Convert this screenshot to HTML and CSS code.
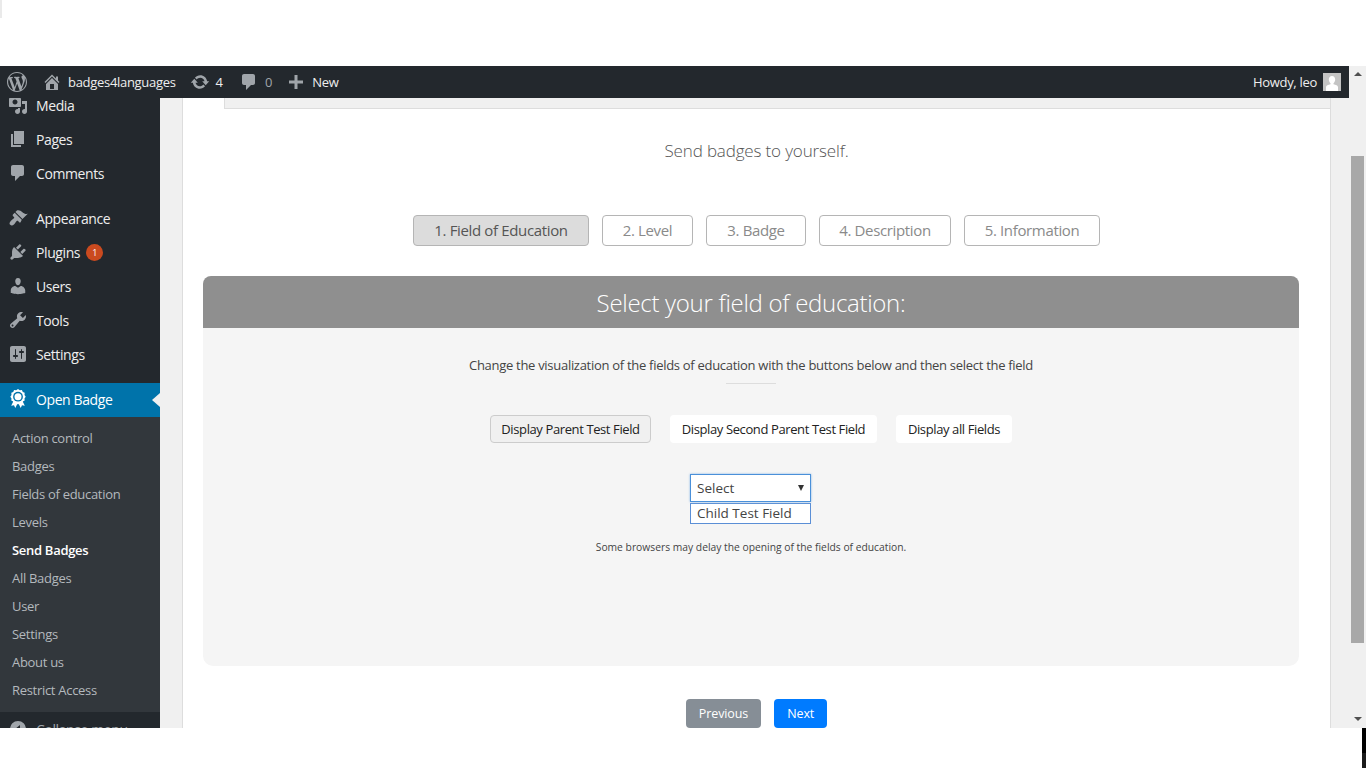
FILE: index.html
```html
<!DOCTYPE html>
<html lang="en">
<head>
  <meta charset="UTF-8">
  <title>Send Badges</title>
  <link rel="stylesheet" href="styles.css">
</head>
<body>
  <div class="window">
    <div class="page">

      <!-- TOP ADMIN BAR -->
      <div class="adminbar">
        <a class="bar-item bar-logo">
          <svg class="bar-icon wp" viewBox="0 0 20 20"><path d="M20 10c0-5.51-4.49-10-10-10C4.48 0 0 4.49 0 10c0 5.52 4.48 10 10 10 5.51 0 10-4.48 10-10zM7.78 15.37L4.37 6.22c.55-.02 1.17-.08 1.17-.08.5-.06.44-1.13-.06-1.11 0 0-1.45.11-2.37.11-.18 0-.37 0-.58-.01C4.12 2.69 6.87 1.11 10 1.11c2.33 0 4.45.87 6.05 2.34-.68-.11-1.65.39-1.65 1.58 0 .74.45 1.36.9 2.1.35.61.55 1.36.55 2.46 0 1.49-1.4 5-1.4 5l-3.03-8.37c.54-.02.82-.17.82-.17.5-.05.44-1.25-.06-1.22 0 0-1.44.12-2.38.12-.87 0-2.33-.12-2.33-.12-.5-.03-.56 1.2-.06 1.22l.92.08 1.26 3.41zM17.41 10c.24-.64.74-1.87.43-4.25.7 1.29 1.05 2.71 1.05 4.25 0 3.29-1.73 6.24-4.4 7.78.97-2.59 1.94-5.2 2.92-7.78zM6.1 18.09C3.12 16.65 1.11 13.53 1.11 10c0-1.3.23-2.48.72-3.59C3.25 10.3 4.67 14.2 6.1 18.09zm4.03-6.63l2.58 6.98c-.86.29-1.76.45-2.71.45-.79 0-1.57-.11-2.29-.33.81-2.38 1.62-4.74 2.42-7.1z"/></svg>
        </a>
        <a class="bar-item">
          <svg class="bar-icon" viewBox="0 0 20 20"><path d="M16 8.5l1.53 1.53-1.06 1.06L10 4.62l-6.47 6.47-1.06-1.06L10 2.5l4 4v-2h2v4zm-6-2.46l6 5.99V18H4v-5.97zM12 17v-5H8v5h4z"/></svg>
          <span>badges4languages</span>
        </a>
        <a class="bar-item">
          <svg class="bar-icon" viewBox="0 0 20 20"><path d="M10.2 3.28c3.53 0 6.43 2.61 6.92 6h2.08l-3.5 4-3.5-4h2.32c-.45-1.97-2.21-3.45-4.32-3.45-1.45 0-2.73.71-3.54 1.78L4.95 5.66C6.230 4.200 8.110 3.280 10.200 3.280zm-.4 13.44c-3.52 0-6.43-2.61-6.92-6H.8l3.5-4c1.17 1.33 2.33 2.67 3.5 4H5.48c.45 1.97 2.21 3.45 4.32 3.45 1.45 0 2.73-.71 3.54-1.78l1.71 1.95c-1.28 1.46-3.15 2.38-5.25 2.38z"/></svg>
          <span class="num">4</span>
        </a>
        <a class="bar-item">
          <svg class="bar-icon" viewBox="0 0 20 20"><path d="M5 2h9c1.1 0 2 .9 2 2v7c0 1.1-.9 2-2 2h-2l-5 5v-5H5c-1.1 0-2-.9-2-2V4c0-1.1.9-2 2-2z"/></svg>
          <span class="muted">0</span>
        </a>
        <a class="bar-item">
          <svg class="bar-icon" viewBox="0 0 20 20"><path d="M17 8.500v3h-5.500v5.500h-3v-5.500H3v-3h5.500V3h3v5.500H17z"/></svg>
          <span>New</span>
        </a>
        <a class="bar-item bar-user">
          <span>Howdy, leo</span>
          <span class="avatar">
            <svg viewBox="0 0 18 18"><rect width="18" height="18" fill="#c4c4c4"/><path fill="#fff" d="M9 3c2 0 3.200 1.500 3.200 3.600 0 1.500-.7 2.900-1.700 3.600v1.100c2.300.5 4.500 1.300 4.500 2.900V18H3v-3.800c0-1.600 2.200-2.400 4.500-2.900v-1.100C6.500 9.500 5.800 8.100 5.800 6.600 5.800 4.500 7 3 9 3z"/></svg>
          </span>
        </a>
      </div>

      <div class="layout">
        <!-- SIDE MENU -->
        <div class="sidebar">
          <ul class="menu">
            <li><svg viewBox="0 0 20 20"><path d="M13 11V4c0-.55-.45-1-1-1h-1.670L9 1H5L3.670 3H2c-.55 0-1 .45-1 1v7c0 .55.45 1 1 1h10c.55 0 1-.45 1-1zM7 4.500c1.380 0 2.500 1.120 2.500 2.500S8.380 9.500 7 9.500 4.500 8.380 4.500 7 5.620 4.500 7 4.500zM14 6h5v10.500c0 1.380-1.120 2.500-2.500 2.500S14 17.880 14 16.500s1.120-2.500 2.500-2.500c.17 0 .34.020.5.050V9h-3V6zm-4 8.050V13h2v3.500c0 1.380-1.120 2.500-2.500 2.500S7 17.880 7 16.500 8.120 14 9.500 14c.17 0 .34.020.5.050z"/></svg>Media</li>
            <li><svg viewBox="0 0 20 20"><path d="M6 15V2h10v13H6zm-1 1h8v2H3V5h2v11z"/></svg>Pages</li>
            <li><svg viewBox="0 0 20 20"><path d="M5 2h9c1.100 0 2 .9 2 2v7c0 1.100-.9 2-2 2h-2l-5 5v-5H5c-1.100 0-2-.9-2-2V4c0-1.100.9-2 2-2z"/></svg>Comments</li>
            <li class="sep"></li>
            <li><svg viewBox="0 0 20 20"><path d="M14.480 11.060L7.410 3.990l1.500-1.500c.5-.56 2.300-.47 3.510.32 1.210.8 1.430 1.280 2.910 2.100 1.180.64 2.450 1.260 4.450.85zm-.71.71L6.700 4.700 4.930 6.470c-.39.39-.39 1.020 0 1.410l1.060 1.060c.39.39.39 1.030 0 1.420-.6.6-1.430 1.110-2.210 1.690-.35.26-.7.53-1.010.84-1.550 1.550-1.550 3-.5 3.900.9 1.050 2.400 1 3.900-.5.31-.31.58-.66.84-1.010.58-.78 1.090-1.610 1.690-2.210.39-.39 1.030-.39 1.420 0l1.060 1.060c.39.39 1.020.39 1.410 0z"/></svg>Appearance</li>
            <li><svg viewBox="0 0 20 20"><path d="M13.110 4.360L9.870 7.600 8 5.730l3.240-3.240c.35-.34 1.050-.2 1.560.32.52.51.66 1.210.31 1.550zm-8 1.770l.91-1.120 9.010 9.010-1.190.84c-.71.71-2.630 1.160-3.820 1.160H6.140L4.900 17.260c-.59.59-1.540.59-2.120 0-.59-.58-.59-1.530 0-2.120l1.240-1.240v-3.880c0-1.130.4-3.190 1.090-3.890zm7.260 3.970l3.240-3.240c.34-.35 1.040-.21 1.550.31.52.51.66 1.210.31 1.550l-3.240 3.250z"/></svg>Plugins<span class="count">1</span></li>
            <li><svg viewBox="0 0 20 20"><path d="M10 9.250c-2.270 0-2.730-3.440-2.730-3.440C7 4.020 7.820 2 9.970 2c2.160 0 2.980 2.020 2.710 3.810 0 0-.41 3.440-2.680 3.440zm0 2.570L12.720 10c2.390 0 4.520 2.330 4.520 4.530v2.490s-3.650 1.130-7.240 1.130c-3.650 0-7.240-1.130-7.240-1.130v-2.490c0-2.250 1.940-4.480 4.470-4.480z"/></svg>Users</li>
            <li><svg viewBox="0 0 20 20"><path d="M16.680 9.770c-1.340 1.340-3.300 1.670-4.950.99l-5.410 6.520c-.99.99-2.590.99-3.580 0s-.99-2.590 0-3.570l6.520-5.420c-.68-1.650-.35-3.610.99-4.950 1.280-1.280 3.120-1.620 4.720-1.060l-2.890 2.890 2.820 2.820 2.860-2.870c.53 1.580.18 3.390-1.080 4.650zM3.810 16.210c.4.39 1.040.39 1.430 0 .4-.4.4-1.040 0-1.430-.39-.4-1.030-.4-1.430 0-.39.39-.39 1.030 0 1.430z"/></svg>Tools</li>
            <li><svg viewBox="0 0 20 20"><path d="M18 16V4c0-1.100-.9-2-2-2H4c-1.100 0-2 .9-2 2v12c0 1.100.9 2 2 2h12c1.100 0 2-.9 2-2zM8 11h1c.55 0 1 .45 1 1s-.45 1-1 1H8v1.500c0 .28-.22.5-.5.5s-.5-.22-.5-.5V13H6c-.55 0-1-.45-1-1s.45-1 1-1h1V5.500c0-.28.22-.5.5-.5s.5.220.5.5V11zm5-2h-1c-.55 0-1-.45-1-1s.45-1 1-1h1V5.500c0-.28.22-.5.5-.5s.5.220.5.5V7h1c.55 0 1 .45 1 1s-.45 1-1 1h-1v5.500c0 .28-.22.5-.5.5s-.5-.22-.5-.5V9z"/></svg>Settings</li>
            <li class="sep"></li>
            <li class="current">
              <svg viewBox="0 0 20 20"><path fill="#fff" d="M6 11l-2.800 5.800 2.800-.5 1.300 2.700L10 13.500l2.700 5.500 1.300-2.700 2.800.5L14 11z"/><path fill="#fff" d="M10 0l1.800 1.200 2.100-.2.9 1.900 1.900.9-.2 2.100L17.700 7.700l-1.200 1.800.2 2.100-1.900.9-.9 1.900-2.100-.2L10 15.400l-1.800-1.200-2.100.2-.9-1.900-1.900-.9.2-2.100-1.200-1.800 1.200-1.800-.2-2.100 1.900-.9.9-1.900 2.100.2z"/><circle cx="10" cy="7.700" r="4.900" fill="#0073aa"/><circle cx="10" cy="7.700" r="3.500" fill="#fff"/></svg>
              Open Badge
            </li>
          </ul>
          <ul class="submenu">
            <li>Action control</li>
            <li>Badges</li>
            <li>Fields of education</li>
            <li>Levels</li>
            <li class="active">Send Badges</li>
            <li>All Badges</li>
            <li>User</li>
            <li>Settings</li>
            <li>About us</li>
            <li>Restrict Access</li>
          </ul>
          <div class="collapse">
            <svg viewBox="0 0 20 20"><path d="M10 2a8 8 0 1 0 0 16 8 8 0 0 0 0-16zm2 4v8L7 10z"/></svg>
            Collapse menu
          </div>
        </div>

        <!-- CONTENT -->
        <div class="content">
          <div class="card">
            <div class="tabstrip">
              <div class="tab-blank"></div>
              <div class="tab-rest"></div>
            </div>

            <p class="lead">Send badges to yourself.</p>

            <div class="steps">
              <a class="step on">1. Field of Education</a>
              <a class="step s2">2. Level</a>
              <a class="step s3">3. Badge</a>
              <a class="step s4">4. Description</a>
              <a class="step s5">5. Information</a>
            </div>

            <div class="panel">
              <h2>Select your field of education:</h2>
              <div class="panel-body">
                <p class="hint">Change the visualization of the fields of education with the buttons below and then select the field</p>
                <div class="rule"></div>
                <div class="choices">
                  <a class="choice c1 on">Display Parent Test Field</a>
                  <a class="choice c2">Display Second Parent Test Field</a>
                  <a class="choice c3">Display all Fields</a>
                </div>
                <div class="picker">
                  <div class="picker-head">Select<span class="caret"></span></div>
                  <div class="picker-list">Child Test Field</div>
                </div>
                <p class="note">Some browsers may delay the opening of the fields of education.</p>
              </div>
            </div>

            <div class="actions">
              <a class="btn grey">Previous</a>
              <a class="btn blue">Next</a>
            </div>
          </div>
        </div>
      </div>
    </div>

    <!-- PAGE SCROLLBAR -->
    <div class="scrollbar">
      <span class="arrow up"></span>
      <span class="thumb"></span>
      <span class="arrow down"></span>
    </div>
  </div>

  <div class="edge"></div>
  <div class="corner"></div>
</body>
</html>
```

FILE: styles.css
```css
/* Whole screenshot: white band above and below the browser window */
body {
  margin: 0;
  height: 768px;
  overflow: hidden;
  background: #fff;
  font-family: "Open Sans", "Noto Sans", sans-serif;
  padding-top: 66px;
  box-sizing: border-box;
}

.window {
  display: flex;
  height: 662px;
  overflow: hidden;
}

.page {
  flex: 1;
  min-width: 0;
  display: flex;
  flex-direction: column;
}

/* ADMIN BAR */
.adminbar {
  display: flex;
  align-items: center;
  height: 32px;
  flex: none;
  background: #23282d;
  color: #eee;
  font-size: 13px;
  letter-spacing: -0.3px;
}

.bar-item {
  display: flex;
  align-items: center;
  gap: 6px;
  padding: 0 7px;
}

.bar-logo {
  padding-right: 8px;
}

.bar-icon {
  width: 20px;
  height: 20px;
  fill: #a0a5aa;
}

.num {
  min-width: 9.500px;
}

.muted {
  color: #a0a5aa;
}

.bar-user {
  margin-left: auto;
  padding-right: 8px;
}

.avatar {
  width: 18px;
  height: 18px;
  display: block;
}

.avatar svg {
  display: block;
  width: 18px;
  height: 18px;
}

.layout {
  flex: 1;
  min-height: 0;
  display: flex;
}

/* SIDE MENU */
.sidebar {
  width: 160px;
  flex: none;
  background: #23282d;
  overflow: hidden;
  color: #eee;
  font-size: 14px;
  letter-spacing: -0.4px;
}

.menu,
.submenu {
  list-style: none;
  margin: 0;
  padding: 0;
}

.menu {
  margin-top: -9px;
}

.menu li {
  display: flex;
  align-items: center;
  box-sizing: border-box;
  height: 34px;
  padding: 0 0 2px 8px;
  position: relative;
}

.menu li svg {
  width: 20px;
  height: 20px;
  fill: #a0a5aa;
  margin-right: 8px;
  flex: none;
}

.menu li.sep {
  height: 11px;
  padding: 0;
}

.menu li.current {
  background: #0073aa;
  color: #fff;
}

/* white arrow on the right edge of the current item */
.menu li.current::after {
  content: "";
  position: absolute;
  right: 0;
  top: 10px;
  border: 7px solid transparent;
  border-right: 8px solid #f0f0f0;
  border-left-width: 0;
}

.count {
  width: 17px;
  height: 17px;
  margin-left: 6px;
  border-radius: 50%;
  background: #ca4a1f;
  color: #fff;
  font-size: 9px;
  line-height: 17px;
  text-align: center;
}

.submenu {
  background: #32373c;
  padding: 7px 0 8px;
  font-size: 13px;
  color: #b4b9be;
  letter-spacing: -0.3px;
}

.submenu li {
  height: 28px;
  line-height: 28px;
  padding-left: 12px;
}

.submenu li.active {
  color: #fff;
  font-weight: 600;
}

.collapse {
  display: flex;
  align-items: center;
  height: 34px;
  padding-left: 8px;
  color: #a0a5aa;
}

.collapse svg {
  width: 20px;
  height: 20px;
  fill: #a0a5aa;
  margin-right: 8px;
}

/* CONTENT */
.content {
  flex: 1;
  min-width: 0;
  background: #f0f0f0;
  padding: 0 18px 0 22px;
}

.card {
  background: #fff;
  border-left: 1px solid #ddd;
  border-right: 1px solid #ddd;
  height: 100%;
  overflow: hidden;
}

.tabstrip {
  display: flex;
  height: 11px;
}

.tab-blank {
  width: 41px;
}

.tab-rest {
  flex: 1;
  background: #f0f0f0;
  border-left: 1px solid #ddd;
  border-bottom: 1px solid #ddd;
}

.lead {
  margin: 30px 0 0;
  text-align: center;
  font-size: 17px;
  font-weight: 300;
  letter-spacing: -0.15px;
  line-height: 24px;
  color: #555;
}

.steps {
  display: flex;
  justify-content: center;
  gap: 13px;
  margin-top: 52px;
}

.step {
  box-sizing: border-box;
  height: 31px;
  line-height: 29px;
  text-align: center;
  border: 1px solid #b5b5b5;
  border-radius: 4px;
  font-size: 15px;
  letter-spacing: -0.35px;
  color: #8a8a8a;
  background: #fff;
  width: 176px;
}

.step.on {
  background: #dcdcdc;
  color: #555;
}

.step.s2 { width: 91px; }
.step.s3 { width: 100px; }
.step.s4 { width: 132px; }
.step.s5 { width: 136px; }

.panel {
  margin: 30px 31px 0 20px;
}

.panel h2 {
  margin: 0;
  height: 52px;
  line-height: 54px;
  text-align: center;
  background: #8f8f8f;
  color: #fff;
  font-size: 24px;
  font-weight: 300;
  letter-spacing: -0.29px;
  border-radius: 8px 8px 0 0;
  overflow: hidden;
}

.panel-body {
  height: 338px;
  background: #f5f5f5;
  border-radius: 0 0 10px 10px;
  display: flex;
  flex-direction: column;
  align-items: center;
  color: #333;
}

.hint {
  margin: 27px 0 0;
  font-size: 13px;
  letter-spacing: -0.29px;
  line-height: 20px;
  color: #444;
}

.rule {
  width: 50px;
  height: 1px;
  margin-top: 8px;
  background: #ddd;
}

.choices {
  display: flex;
  gap: 19px;
  margin-top: 31px;
}

.choice {
  box-sizing: border-box;
  height: 28px;
  line-height: 28px;
  text-align: center;
  background: #fff;
  border-radius: 4px;
  font-size: 13px;
  letter-spacing: -0.39px;
  color: #222;
}

.choice.c1 { width: 161px; }
.choice.c2 { width: 207px; }
.choice.c3 { width: 116px; }

.choice.on {
  background: #f0f0f0;
  border: 1px solid #ccc;
  line-height: 26px;
}

.picker {
  width: 121px;
  margin: 31px 1px 0 0;
  font-size: 13.5px;
  color: #444;
}

.picker-head {
  box-sizing: border-box;
  height: 28px;
  line-height: 27px;
  padding-left: 6px;
  background: #fff;
  border: 1px solid #4a90d9;
  box-shadow: 0 0 2px #7fb0e5;
  position: relative;
}

.caret {
  position: absolute;
  right: 6px;
  top: 10px;
  border: 3.5px solid transparent;
  border-top: 6px solid #333;
  border-bottom: 0;
}

.picker-list {
  box-sizing: border-box;
  height: 21px;
  line-height: 19px;
  margin-top: 1px;
  padding-left: 6px;
  background: #fff;
  border: 1px solid #5b8fd6;
}

.note {
  margin: 16px 0 0;
  font-size: 10.3px;
  line-height: 14px;
  color: #444;
}

.actions {
  display: flex;
  justify-content: center;
  gap: 13px;
  margin-top: 33px;
}

.btn {
  height: 29px;
  line-height: 29px;
  padding: 0 13px;
  border-radius: 4px;
  color: #fff;
  font-size: 12.5px;
  letter-spacing: -0.1px;
}

.btn.grey { background: #868e96; }
.btn.blue { background: #007bff; }

/* SCROLLBAR */
.scrollbar {
  width: 17px;
  flex: none;
  background: #f0f0f0;
  display: flex;
  flex-direction: column;
  align-items: center;
}

.arrow {
  border-left: 4px solid transparent;
  border-right: 4px solid transparent;
}

.arrow.up {
  margin-top: 6px;
  border-bottom: 4px solid #505050;
}

.thumb {
  width: 13px;
  height: 487px;
  margin-top: 80px;
  background: #a8a8a8;
}

.arrow.down {
  margin-top: 74px;
  border-top: 4px solid #505050;
}

/* stray marks of the capture */
.edge {
  position: absolute;
  left: 0;
  top: 0;
  width: 2px;
  height: 18px;
  background: #eaeaea;
}

.corner {
  position: absolute;
  right: 0;
  top: 728px;
  width: 4px;
  height: 40px;
  background: linear-gradient(#000 62%, #1a1a1a 62%);
}
```
